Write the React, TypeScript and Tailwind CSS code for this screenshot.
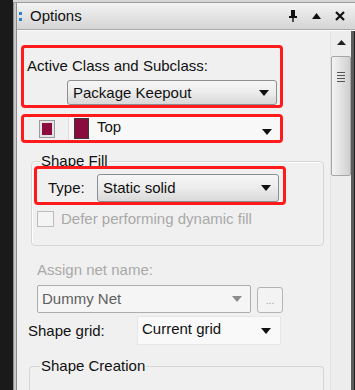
const font = { fontFamily: '"Liberation Sans", Arial, sans-serif' };

function DownArrow({ color = "#111" }: { color?: string }) {
  return (
    <svg width="10" height="6" viewBox="0 0 10 6">
      <polygon points="0,0 10,0 5,6" fill={color} />
    </svg>
  );
}

function Combo({ label, className }: { label: string; className: string }) {
  return (
    <div
      className={`flex items-center justify-between rounded-[3px] border border-[#8d8e8f] bg-gradient-to-b from-[#f7f7f7] via-[#ececec] to-[#d9d9d9] pl-[5px] pr-[7px] text-[15px] text-[#111] ${className}`}
    >
      <span>{label}</span>
      <DownArrow />
    </div>
  );
}

export default function App() {
  return (
    <div
      className="flex h-[390px] w-[355px] overflow-hidden bg-[#1c1c1c] text-[15px] leading-[18px] text-[#111]"
      style={font}
    >
      {/* dark strip at the left */}
      <div className="w-[13px] shrink-0 bg-[#1a1a1a]" />

      <div className="flex flex-1 flex-col">
        {/* top strip */}
        <div className="h-[3px] shrink-0 border-b border-[#9c9c9c] bg-[#d6d6d6]" />

        <div className="flex flex-1">
          {/* left frame */}
          <div className="w-[4px] shrink-0 border-x border-[#8c8c8c] bg-[#c9c9c9]" />

          <div className="flex flex-1 flex-col">
            {/* title bar */}
            <div className="flex h-[27px] shrink-0 items-center border-b border-[#a9a9a9] bg-gradient-to-b from-[#f3f3f3] to-[#d5d5d5]">
              <div className="ml-[2px] flex flex-col gap-[3px]">
                <div className="h-[3px] w-[3px] bg-[#2a7fd4]" />
                <div className="h-[3px] w-[3px] bg-[#2a7fd4]" />
              </div>
              <span className="ml-[8px] text-[15px]">Options</span>
              <div className="ml-auto mr-[10px] flex items-center gap-[14px]">
                <svg width="10" height="12" viewBox="0 0 10 12">
                  <rect x="3" y="0" width="4" height="6" fill="#111" />
                  <rect x="1" y="6" width="8" height="2" fill="#111" />
                  <rect x="4.3" y="8" width="1.4" height="4" fill="#111" />
                </svg>
                <svg width="9" height="6" viewBox="0 0 9 6">
                  <polygon points="0,6 9,6 4.5,0" fill="#111" />
                </svg>
                <svg width="10" height="10" viewBox="0 0 10 10">
                  <path d="M1 1 L9 9 M9 1 L1 9" stroke="#111" strokeWidth="2.2" />
                </svg>
              </div>
            </div>

            <div className="flex flex-1 border-t border-[#fbfbfb]">
              {/* content */}
              <div className="flex w-[313px] shrink-0 flex-col bg-[#f0f0f0]">
                {/* Active class box */}
                <div className="ml-[4px] mt-[14px] flex h-[63px] w-[262px] flex-col rounded-[4px] border-[3px] border-[#ff1b1b]">
                  <div className="pl-[3px] pt-[9px]">Active Class and Subclass:</div>
                  <Combo label="Package Keepout" className="ml-[43px] mt-[5px] h-[25px] w-[210px]" />
                </div>

                {/* Subclass box */}
                <div className="ml-[4px] mt-[6px] flex h-[29px] w-[262px] items-center rounded-[4px] border-[3px] border-[#ff1b1b]">
                  <div className="ml-[15px] flex h-[18px] w-[16px] items-center justify-center border border-[#9a9a9a] bg-[#e4e4e4] p-[2px]">
                    <div className="h-full w-full bg-[#8c0c40]" />
                  </div>
                  <div className="ml-[13px] flex h-full flex-1 items-center border-l border-[#dcdcdc] bg-[#f8f8f8] pr-[8px]">
                    <div className="ml-[5px] h-[21px] w-[15px] border border-[#3a3a3a] bg-[#8a0b3e]" />
                    <span className="ml-[8px] -mt-[3px]">Top</span>
                    <div className="ml-auto mt-[6px]">
                      <DownArrow />
                    </div>
                  </div>
                </div>

                {/* Shape Fill group */}
                <div className="ml-[14px] mt-[18px] flex w-[293px] flex-col rounded-[4px] border border-[#d6d6d6] pb-[17px] shadow-[inset_1px_1px_0_#fff]">
                  <div className="-mt-[10px] ml-[8px] w-fit bg-[#f0f0f0] px-[1px]">Shape Fill</div>
                  <div className="-mt-[4px] ml-[2px] flex h-[39px] w-[252px] items-end rounded-[4px] border-[3px] border-[#ff1b1b]">
                    <div className="flex h-[28px] w-[60px] items-center pl-[11px]">Type:</div>
                    <Combo label="Static solid" className="h-[28px] w-[182px]" />
                  </div>
                  <div className="ml-[5px] mt-[5px] flex items-center">
                    <div className="h-[16px] w-[17px] border border-[#bdbdbd] bg-[#f4f4f4]" />
                    <span className="ml-[7px] text-[#a9a9a9]">Defer performing dynamic fill</span>
                  </div>
                </div>

                <div className="ml-[20px] mt-[15px] text-[#a9a9a9]">Assign net name:</div>

                <div className="ml-[20px] mt-[6px] flex items-end">
                  <div className="flex h-[28px] w-[214px] items-center justify-between rounded-[2px] border border-[#adadad] bg-[#f5f5f5] pl-[4px] pr-[8px] text-[#5f5f5f]">
                    <span>Dummy Net</span>
                    <DownArrow color="#8c8c8c" />
                  </div>
                  <div className="ml-[6px] flex h-[26px] w-[26px] items-end justify-center rounded-[3px] border border-[#b4b4b4] bg-[#f3f3f3] pb-[6px] text-[10px] leading-[10px] text-[#9a9a9a]">
                    ...
                  </div>
                </div>

                <div className="ml-[11px] mt-[3px] flex items-center">
                  <div className="w-[109px]">Shape grid:</div>
                  <div className="flex h-[29px] w-[144px] items-center justify-between border border-[#e6e6e6] bg-[#f9f9f9] pl-[4px] pr-[9px]">
                    <span className="-mt-[4px]">Current grid</span>
                    <DownArrow />
                  </div>
                </div>

                {/* Shape Creation group */}
                <div className="ml-[12px] mt-[21px] flex h-[40px] w-[295px] flex-col rounded-t-[4px] border-l border-t border-r border-[#d6d6d6]">
                  <div className="-mt-[10px] ml-[10px] w-fit bg-[#f0f0f0] px-[1px]">Shape Creation</div>
                </div>
              </div>

              {/* scrollbar */}
              <div className="flex w-[21px] shrink-0 flex-col items-center border-l border-[#e2e2e2] bg-[#ededed]">
                <div className="mt-[9px]">
                  <svg width="9" height="5" viewBox="0 0 9 5">
                    <polygon points="0,5 9,5 4.5,0" fill="#222" />
                  </svg>
                </div>
                <div className="mt-[11px] flex h-[120px] w-[20px] flex-col items-center rounded-[2px] border border-[#a6a6a6] bg-gradient-to-r from-[#f4f4f4] via-[#e2e2e2] to-[#cfcfcf]">
                  <div className="mt-[15px] flex flex-col gap-[2px]">
                    <div className="h-px w-[8px] bg-[#555]" />
                    <div className="h-px w-[8px] bg-[#555]" />
                    <div className="h-px w-[8px] bg-[#555]" />
                    <div className="h-px w-[8px] bg-[#555]" />
                  </div>
                </div>
                <div className="mt-auto mb-[7px]">
                  <DownArrow color="#333" />
                </div>
              </div>

              {/* right edge */}
              <div className="w-[3px] shrink-0 bg-[#5c5c5c]" />
            </div>
          </div>
        </div>
      </div>
    </div>
  );
}
